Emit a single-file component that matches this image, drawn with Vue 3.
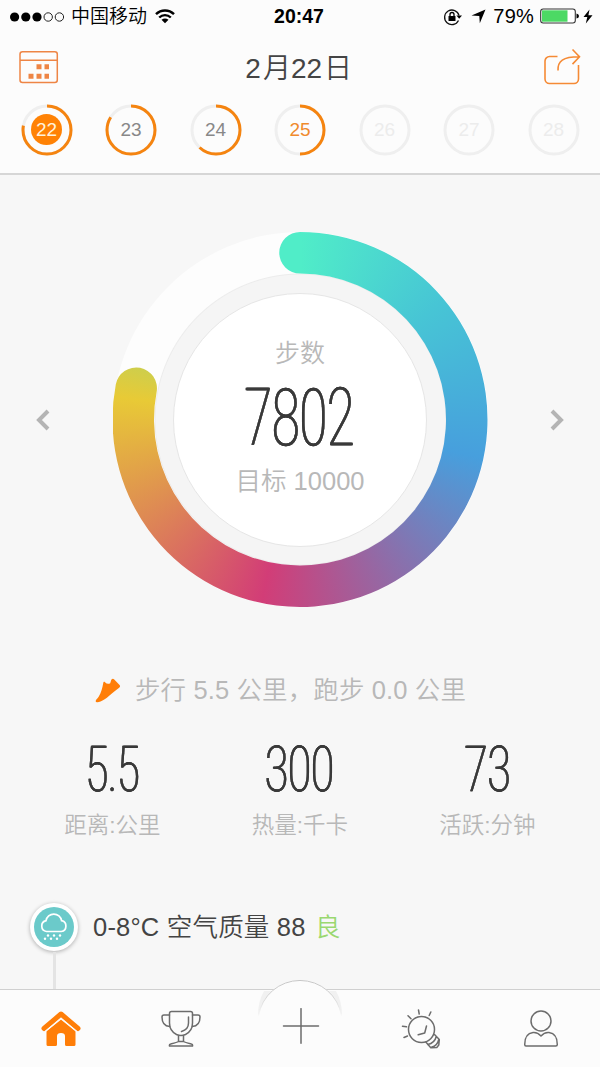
<template>
    <div class="screen">
        <header class="top">
            <div class="status">
                <div class="carrier">
                    <svg width="55" height="12" viewBox="0 0 55 12">
                        <circle v-for="n in 5" :key="n" :cx="n * 11.2 - 6.6" cy="6" :r="n < 4 ? 4.6 : 4.2"
                            :fill="n < 4 ? '#000' : 'none'" :stroke="n < 4 ? 'none' : '#222'" />
                    </svg>
                    <span class="operator">中国移动</span>
                    <svg class="wifi" width="20" height="15" viewBox="0 0 20 15">
                        <path d="M1 5.2C6 .2 14 .2 19 5.2M4.2 8.5c3.3-3.2 8.300-3.200 11.600 0" fill="none" stroke="#000" stroke-width="2.4" />
                        <path d="M6.500 10.800q3.500-2.800 7 0L10 14.300z" />
                    </svg>
                </div>
                <b class="time">20:47</b>
                <div class="power">
                    <svg width="20" height="18" viewBox="0 0 20 18">
                        <path d="M15.500 12.500A7.300 7.300 0 1 1 16 7.500" fill="none" stroke="#111" stroke-width="1.300" />
                        <path d="M13.400 7.500h5.600l-2.800 3.300z" />
                        <rect x="5.500" y="8" width="7" height="5" rx=".6" />
                        <path d="M7 8V6.500a2 2 0 0 1 4 0V8" fill="none" stroke="#000" stroke-width="1.300" />
                    </svg>
                    <svg class="arrow" width="15" height="15" viewBox="0 0 15 15">
                        <path d="M14.500.5L8.800 14.200 8.300 6.900.5 6.500z" />
                    </svg>
                    <span class="percent">79%</span>
                    <svg class="battery" width="40" height="17" viewBox="0 0 40 17">
                        <rect x=".7" y="1" width="34.600" height="14" rx="2.500" fill="#fff" stroke="#333" stroke-width="1.100" />
                        <rect x="2" y="2.300" width="25.500" height="11.400" fill="#4cd964" />
                        <path d="M36.500 5.500q2.500.5 2.500 2.500t-2.500 2.500z" />
                    </svg>
                    <svg class="bolt" width="10" height="15" viewBox="0 0 10 15">
                        <path d="M6.500.5L.5 8h3.800L2.800 14.500 9.500 6.300H5.400z" />
                    </svg>
                </div>
            </div>
            <div class="titlebar">
                <svg class="calendar" width="40" height="34" viewBox="0 0 40 34" fill="none" stroke="#ee8545" stroke-width="1.500">
                    <rect x="1" y="1.700" width="37.300" height="30.800" rx="2.500" />
                    <path d="M1 10.300h37.300" />
                    <path d="M17.500 14.200h5v5h-5zM25.500 14.200h4.500v5h-4.500zM9.500 23.800h5v5h-5zM17.500 23.800h5v5h-5zM25.500 23.800h4.500v5h-4.500z" fill="#ee8545" stroke="none" />
                </svg>
                <h1>2<i>月</i>22<i>日</i></h1>
                <svg class="share" width="38" height="38" viewBox="0 0 38 38" fill="none" stroke="#f58a35" stroke-width="1.600">
                    <path d="M14.500 8.500H6.500a4.500 4.500 0 0 0-4.500 4.500v18a4.500 4.500 0 0 0 4.500 4.500h24.500a4.500 4.500 0 0 0 4.500-4.500V17" />
                    <path d="M15 22.500C14.500 13 20 8.800 36 8.800M29.500 1.500l7 7.300-7 7.300" />
                </svg>
            </div>
            <div class="days">
                <div v-for="day in days" :key="day.date" class="day" :class="day.state">
                    <svg width="52" height="52" viewBox="0 0 52 52" fill="none" stroke-width="3">
                        <circle cx="26" cy="26" r="24" stroke="#efefef" />
                        <circle v-if="day.progress" cx="26" cy="26" r="24" stroke="#f58410" pathLength="100"
                            :stroke-dasharray="`${day.progress} 100`" transform="rotate(-90 26 26)" />
                    </svg>
                    <span>{{ day.date }}</span>
                </div>
            </div>
        </header>

        <main>
            <section class="goal">
                <svg class="chevron" width="14" height="24" viewBox="0 0 14 24"><path d="M12 3L3 12l9 9" /></svg>
                <div class="dial">
                    <div class="track"></div>
                    <div class="progress"></div>
                    <div class="center">
                        <p>步数</p>
                        <svg class="digits" width="220" height="100" viewBox="-50 -12 220 100">
                            <text x="5" y="66" font-size="80" textLength="110" lengthAdjust="spacingAndGlyphs">7802</text>
                        </svg>
                        <p class="target">目标 10000</p>
                    </div>
                </div>
                <svg class="chevron" width="14" height="24" viewBox="0 0 14 24"><path d="M2 3l9 9-9 9" /></svg>
            </section>

            <div class="summary">
                <svg width="26" height="25" viewBox="0 0 26 25">
                    <path d="M10 4.200Q12.500 6.800 15.200 5.200L16.300 1.800Q17.600.2 19 1.200L24.800 7.300Q25.700 8.700 24.200 9.800C17 15 11 21.500 5.500 23.600 3 24.500.8 24.300.7 23.400.5 21.600 2.300 21 3.500 19 6.500 14 7.300 10 8.200 5.200 8.500 3.800 9.300 3.500 10 4.200z" fill="#ff7e08" />
                </svg>
                <span>步行 5.5 公里，跑步 0.0 公里</span>
            </div>

            <section class="stats">
                <div v-for="stat in stats" :key="stat.label" class="stat">
                    <svg class="digits" width="160" height="80" viewBox="-30 -10 160 80">
                        <text :x="50 - stat.width / 2" y="52" font-size="63" :textLength="stat.width" lengthAdjust="spacingAndGlyphs">{{ stat.value }}</text>
                    </svg>
                    <p>{{ stat.label }}</p>
                </div>
            </section>

            <section class="weather">
                <div class="badge">
                    <svg width="40" height="40" viewBox="0 0 40 40">
                        <circle cx="20" cy="20" r="20" fill="#6bcaca" />
                        <path d="M12.500 24.500a5.500 5.500 0 0 1-.5-10.800 7.900 7.900 0 0 1 15.600 0 5.500 5.500 0 0 1-.3 10.800z" fill="none" stroke="#fff" stroke-width="1.700" />
                        <g fill="#fff">
                            <circle cx="14" cy="28.500" r="1.200" /><circle cx="20" cy="28.500" r="1.200" /><circle cx="26" cy="28.500" r="1.200" />
                            <circle cx="11" cy="31.800" r="1.200" /><circle cx="17" cy="31.800" r="1.200" /><circle cx="23" cy="31.800" r="1.200" />
                        </g>
                    </svg>
                </div>
                <p>0-8°C 空气质量 88 <em>良</em></p>
            </section>
        </main>

        <nav>
            <svg class="bump" width="100" height="50" viewBox="0 0 100 50">
                <defs>
                    <linearGradient id="fade" x1="0" y1="0" x2="0" y2="38" gradientUnits="userSpaceOnUse">
                        <stop offset="0" stop-color="#c6c6c6" />
                        <stop offset=".4" stop-color="#cfcfcf" />
                        <stop offset="1" stop-color="#fcfcfc" />
                    </linearGradient>
                </defs>
                <path d="M8 37Q8 22 14 12H86Q92 22 92 37z" fill="#f1f1f1" />
                <path d="M8 43A42 42 0 0 1 92 43v7H8z" fill="#fcfcfc" />
                <path d="M8.500 37A42 42 0 0 1 91.500 37" fill="none" stroke="url(#fade)" />
            </svg>
            <a class="tab">
                <svg width="42" height="42" viewBox="0 0 42 42" fill="#ff7e08">
                    <path d="M4 20.500L21 6l17 14.500" fill="none" stroke="#ff7e08" stroke-width="5" stroke-linecap="round" stroke-linejoin="round" />
                    <path d="M6.500 23L21 11l14.500 12v13.500q0 1.500-1.500 1.500h-7.500q-1.500 0-1.500-1.500V28q0-3-4-3t-4 3v8.500q0 1.500-1.500 1.500H8q-1.500 0-1.500-1.500z" />
                    <path d="M5.500 23.300L21 10.800l15.500 12.500" fill="none" stroke="#fcfcfc" stroke-width="1.400" />
                </svg>
            </a>
            <a class="tab">
                <svg width="42" height="42" viewBox="0 0 42 42" class="line">
                    <path d="M11.500 3.500q-2 0-2 2V15q0 8 7 11.500 4.500 2 9 0 7-3.500 7-11.500V5.500q0-2-2-2z" />
                    <path d="M9.500 7H4Q2 7 2 9q0 9 7.700 9.500M32.500 7H38q2 0 2 2 0 9-7.700 9.500M28.500 9v6q0 6.500-7 8.500M18.500 27.500v6M23.500 27.500v6M18.500 33.500h5q1.500 1 7 2.200 2.500.5 2 2.300H9.500q-.5-1.800 2-2.300 5.500-1.200 7-2.200z" />
                </svg>
            </a>
            <a class="tab">
                <svg width="42" height="42" viewBox="0 0 42 42" class="line"><path d="M3.500 18h35M21 .7v34.600" /></svg>
            </a>
            <a class="tab">
                <svg width="42" height="42" viewBox="0 0 42 42" class="line">
                    <circle cx="21.500" cy="21.500" r="13" />
                    <path d="M26.500 18l-1.800 7-6.500 1.700M34.500 26.500l4.800 5-.5 5.500-2 2.500-6 .3-5-5.800M36.300 28.500c-1 4-4 7-8.500 8M38.800 31.500c-1 4-4 7-7 7.500" />
                    <path d="M18.500 2l.7 4M30.800 4l-1.600 3.500M8 7.700l3 3M2.500 18.200l4 .6M4 29.500l3.500-1.500" />
                </svg>
            </a>
            <a class="tab">
                <svg width="42" height="42" viewBox="0 0 42 42" class="line">
                    <circle cx="21" cy="13" r="10" />
                    <path d="M6 38Q4.700 38 4.700 36.500q0-11 8.300-12 4.500-.5 8 3.500 3.500-4 8-3.500 8.300 1 8.300 12 0 1.500-1.500 1.500z" />
                </svg>
            </a>
        </nav>
    </div>
</template>

<script setup>
const days = [
    { date: 22, progress: 78, state: 'active' },
    { date: 23, progress: 84, state: '' },
    { date: 24, progress: 62, state: '' },
    { date: 25, progress: 50, state: 'today' },
    { date: 26, progress: 0, state: 'future' },
    { date: 27, progress: 0, state: 'future' },
    { date: 28, progress: 0, state: 'future' }
]

// width: drawn width of the condensed digits
const stats = [
    { value: '5.5', label: '距离:公里', width: 54 },
    { value: '300', label: '热量:千卡', width: 69 },
    { value: '73', label: '活跃:分钟', width: 46 }
]
</script>

<style>
body {
    margin: 0;
}
</style>

<style scoped>
.screen {
    width: 600px;
    height: 1067px;
    display: flex;
    flex-direction: column;
    overflow: hidden;
    background: #f7f7f7;
    font-family: "Liberation Sans", "Noto Sans CJK SC", sans-serif;
    font-weight: 350;
    color: #444;
}

svg {
    display: block;
    flex: none;
}

p,
h1 {
    margin: 0;
    font-weight: 350;
    white-space: nowrap;
}

.top {
    height: 173px;
    flex: none;
    background: #fcfcfc;
    border-bottom: 2px solid #d6d6d6;
}

.status {
    height: 33px;
    display: grid;
    grid-template-columns: 1fr auto 1fr;
    align-items: center;
    color: #000;
}

.carrier,
.power {
    display: flex;
    align-items: center;
}

.carrier {
    padding-left: 10px;
}

.operator {
    margin: 1px 8px 0 6px;
    font-size: 19px;
    line-height: 30px;
}

.time {
    margin-left: -2px;
    font-size: 19.500px;
}

.power {
    justify-content: flex-end;
    padding-right: 7px;
}

.arrow {
    margin: 0 7px 0 8px;
}

.percent {
    font-size: 20px;
    letter-spacing: 0.2px;
}

.battery {
    margin: 0 3px 0 6px;
}

.titlebar {
    height: 69px;
    display: flex;
    align-items: center;
    justify-content: space-between;
    padding: 0 19px 0 18.500px;
}

.calendar {
    margin-top: -2px;
}

.share {
    margin-top: -1px;
}

h1 {
    margin: -3px 4px 0 0;
    font-size: 28px;
}

h1 i {
    margin-left: 2px;
    font-style: normal;
}

.days {
    display: grid;
    grid-template-columns: repeat(7, 84.500px);
    justify-content: center;
    padding-top: 1.500px;
}

.day {
    display: grid;
    place-items: center;
    font-size: 19px;
    color: #888;
}

.day > * {
    grid-area: 1 / 1;
}

.day.active span {
    width: 31px;
    height: 31px;
    line-height: 31px;
    border-radius: 50%;
    background: #ff8205;
    color: #fff2dc;
    text-align: center;
}

.day.today {
    color: #f08a2c;
}

.day.future {
    color: #ececec;
}

main {
    flex: 1;
    min-height: 0;
}

.goal {
    display: flex;
    align-items: center;
    justify-content: space-between;
    padding: 57px 36px 0;
}

.chevron {
    fill: none;
    stroke: #b4b4b4;
    stroke-width: 4;
}

.dial {
    width: 375px;
    height: 375px;
    display: grid;
    place-items: center;
}

.dial > * {
    grid-area: 1 / 1;
}

.track,
.progress {
    width: 375px;
    height: 375px;
}

.track {
    border-radius: 50%;
    background: radial-gradient(circle, #f5f5f5 144.500px, #ececec 145.500px, #fdfdfd 146.500px);
}

.progress {
    background: conic-gradient(#50edc8 0deg, #47c5d5 50deg, #479fdd 102deg, #d23d77 192deg, #e8ca36 277deg, #c9cf50 290deg, #50edc8 330deg);
    clip-path: path("M187.5 0A187.5 187.5 0 1 1 3.32 152.37A20.75 20.75 0 0 1 44.09 160.14A146 146 0 1 0 187.5 41.5A20.75 20.75 0 0 1 187.5 0Z");
}

.center {
    box-sizing: border-box;
    width: 254px;
    height: 254px;
    display: flex;
    flex-direction: column;
    align-items: center;
    border: 1px solid #e6e6e6;
    border-radius: 50%;
    background: #fff;
    padding-top: 41px;
    font-size: 25px;
    line-height: 36px;
    color: #b8b8b8;
}

.center svg {
    margin: -4px 0 -12px;
}

.target {
    margin-top: 8px;
    font-size: 25.500px;
}

.digits text {
    font-family: Roboto, sans-serif;
    font-weight: 100;
    fill: #3a3a3a;
    stroke: #3a3a3a;
    stroke-width: 0.300;
}

/* thickens only the upright strokes, which the condensing makes thin */
.digits {
    filter: drop-shadow(0.700px 0 0 #3a3a3a) drop-shadow(-0.500px 0 0 #3a3a3a);
}

.summary {
    display: flex;
    align-items: center;
    gap: 14px;
    margin-top: 63px;
    padding-left: 95px;
    font-size: 25.500px;
    line-height: 40px;
    letter-spacing: 0.12px;
    color: #b8b8b8;
    white-space: nowrap;
}

.stats {
    display: grid;
    grid-template-columns: repeat(3, 187.500px);
    justify-content: center;
    margin-top: 19px;
}

.stat {
    display: flex;
    flex-direction: column;
    align-items: center;
    font-size: 22.500px;
    line-height: 32px;
    color: #b8b8b8;
}

.stat p {
    margin-top: 1px;
}

.weather {
    display: flex;
    align-items: center;
    gap: 15px;
    margin-top: 61px;
    padding-left: 30px;
    font-size: 25.500px;
    letter-spacing: 0.2px;
    color: #444;
}

.weather p {
    margin-top: -5px;
}

.badge {
    position: relative;
    padding: 4px;
    border-radius: 50%;
    background: #fff;
    box-shadow: 0 1px 4px rgba(0, 0, 0, 0.3);
}

.badge::after {
    position: absolute;
    content: "";
    top: 49px;
    left: 23px;
    width: 3px;
    height: 60px;
    background: #e4e4e4;
}

em {
    margin-left: 2px;
    font-style: normal;
    color: #9ad870;
}

nav {
    position: relative;
    height: 77px;
    flex: none;
    display: grid;
    grid-template-columns: repeat(5, 120px);
    border-top: 1.500px solid #d0d0d0;
    background: #fcfcfc;
}

.bump {
    position: absolute;
    left: 250px;
    top: -11px;
}

.tab {
    position: relative;
    display: flex;
    justify-content: center;
    padding: 18px 0 0 1px;
}

.line {
    fill: none;
    stroke: #6c6c6c;
    stroke-width: 1.500;
    stroke-linecap: round;
    stroke-linejoin: round;
}
</style>
